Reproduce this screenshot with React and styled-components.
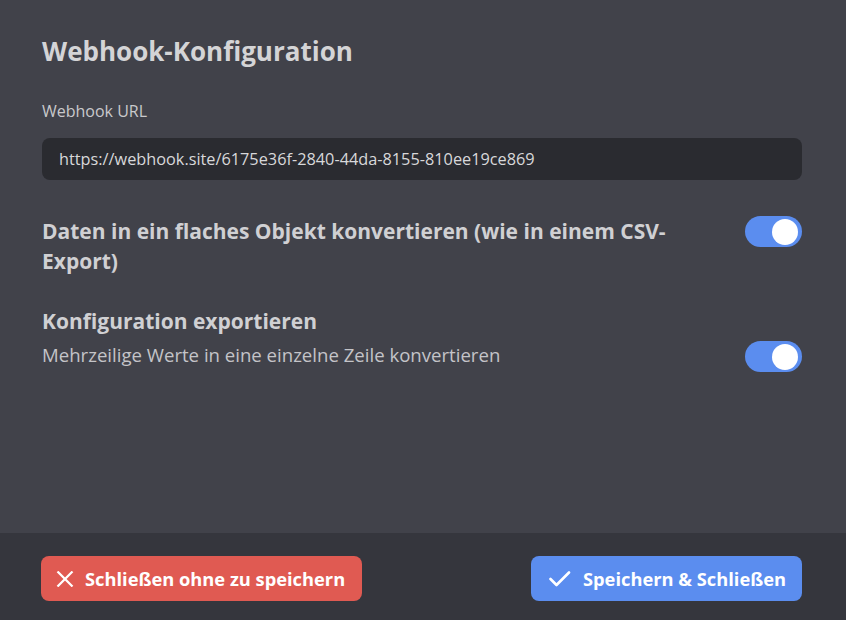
import React, { useState } from "react";
import styled, { createGlobalStyle } from "styled-components";

const FONT = `"Open Sans", "Noto Sans", sans-serif`;

const GlobalStyle = createGlobalStyle`
  html, body {
    margin: 0;
    padding: 0;
    background: #41424a;
  }
  body {
    font-family: ${FONT};
  }
`;

const Modal = styled.div`
  width: 846px;
  height: 620px;
  display: flex;
  flex-direction: column;
  background: #41424a;
  color: #d2d2d4;
`;

const Body = styled.div`
  flex: 1;
  padding: 34px 44px 0 42px;
`;

const Title = styled.h2`
  margin: 0;
  font-size: 26px;
  font-weight: 700;
  line-height: 34px;
  color: #d4d4d6;
`;

const Label = styled.label`
  display: block;
  margin-top: 33px;
  font-size: 16px;
  line-height: 20px;
  color: #c9c9cc;
`;

const Input = styled.input`
  display: block;
  box-sizing: border-box;
  width: 100%;
  height: 42px;
  margin-top: 17px;
  padding: 0 17px;
  border: none;
  border-radius: 8px;
  background: #2a2b30;
  color: #d8d8da;
  font-family: ${FONT};
  font-size: 16.3px;
  outline: none;
`;

const OptionRow = styled.div`
  display: flex;
  align-items: flex-start;
  justify-content: space-between;
  gap: 40px;
  margin-top: ${({ top }) => top}px;
`;

const OptionText = styled.div`
  flex: 1;
  max-width: 660px;
`;

const OptionTitle = styled.div`
  font-size: 21px;
  font-weight: 700;
  line-height: 30px;
  color: #d0d0d3;
`;

const OptionHint = styled.div`
  font-size: 18.6px;
  line-height: 24px;
  color: #c4c4c8;
  margin-top: 7px;
`;

const Track = styled.button`
  flex: none;
  position: relative;
  width: 57px;
  height: 31px;
  padding: 0;
  border: none;
  border-radius: 16px;
  background: ${({ on }) => (on ? "#5b8def" : "#6a6b73")};
  cursor: pointer;
  margin-top: ${({ offset }) => offset || 0}px;
`;

const Knob = styled.span`
  position: absolute;
  top: 2.5px;
  left: ${({ on }) => (on ? "27px" : "3px")};
  width: 26px;
  height: 26px;
  border-radius: 50%;
  background: #ffffff;
`;

const Footer = styled.div`
  height: 87px;
  box-sizing: border-box;
  flex: none;
  background: #35363d;
  display: flex;
  align-items: flex-start;
  justify-content: space-between;
  padding: 23px 44px 0 41px;
`;

const Button = styled.button`
  display: flex;
  align-items: center;
  gap: ${({ gap }) => gap}px;
  height: 45px;
  padding: 0 ${({ pr }) => pr}px 0 ${({ pl }) => pl}px;
  border: none;
  border-radius: 8px;
  background: ${({ variant }) => (variant === "danger" ? "#e05a52" : "#5b8def")};
  color: #ffffff;
  font-family: ${FONT};
  font-size: 18.3px;
  font-weight: 700;
  cursor: pointer;
`;

const Toggle = ({ value, onChange, offset }) => (
  <Track on={value ? 1 : 0} offset={offset} onClick={() => onChange(!value)}>
    <Knob on={value ? 1 : 0} />
  </Track>
);

const XIcon = () => (
  <svg width="18" height="16" viewBox="0 0 18 16" fill="none">
    <path d="M1.5 0.5L16.5 15.5M16.5 0.5L1.5 15.5" stroke="#fff" strokeWidth="2.2" />
  </svg>
);

const CheckIcon = () => (
  <svg width="22" height="16" viewBox="0 0 22 16" fill="none">
    <path d="M1.5 8L7.5 14L20 1.5" stroke="#fff" strokeWidth="2.6" strokeLinecap="round" strokeLinejoin="round" />
  </svg>
);

const App = () => {
  const [flat, setFlat] = useState(true);
  const [singleLine, setSingleLine] = useState(true);

  return (
    <Modal>
      <GlobalStyle />
      <Body>
        <Title>Webhook-Konfiguration</Title>
        <Label>Webhook URL</Label>
        <Input defaultValue="https://webhook.site/6175e36f-2840-44da-8155-810ee19ce869" />
        <OptionRow top={36}>
          <OptionText>
            <OptionTitle>Daten in ein flaches Objekt konvertieren (wie in einem CSV-Export)</OptionTitle>
          </OptionText>
          <Toggle value={flat} onChange={setFlat} offset={0} />
        </OptionRow>
        <OptionRow top={30}>
          <OptionText>
            <OptionTitle>Konfiguration exportieren</OptionTitle>
            <OptionHint>Mehrzeilige Werte in eine einzelne Zeile konvertieren</OptionHint>
          </OptionText>
          <Toggle value={singleLine} onChange={setSingleLine} offset={35} />
        </OptionRow>
      </Body>
      <Footer>
        <Button variant="danger" pl={15} pr={17} gap={11}>
          <XIcon />
          Schließen ohne zu speichern
        </Button>
        <Button pl={18} pr={16} gap={12}>
          <CheckIcon />
          Speichern &amp; Schließen
        </Button>
      </Footer>
    </Modal>
  );
};

export default App;
